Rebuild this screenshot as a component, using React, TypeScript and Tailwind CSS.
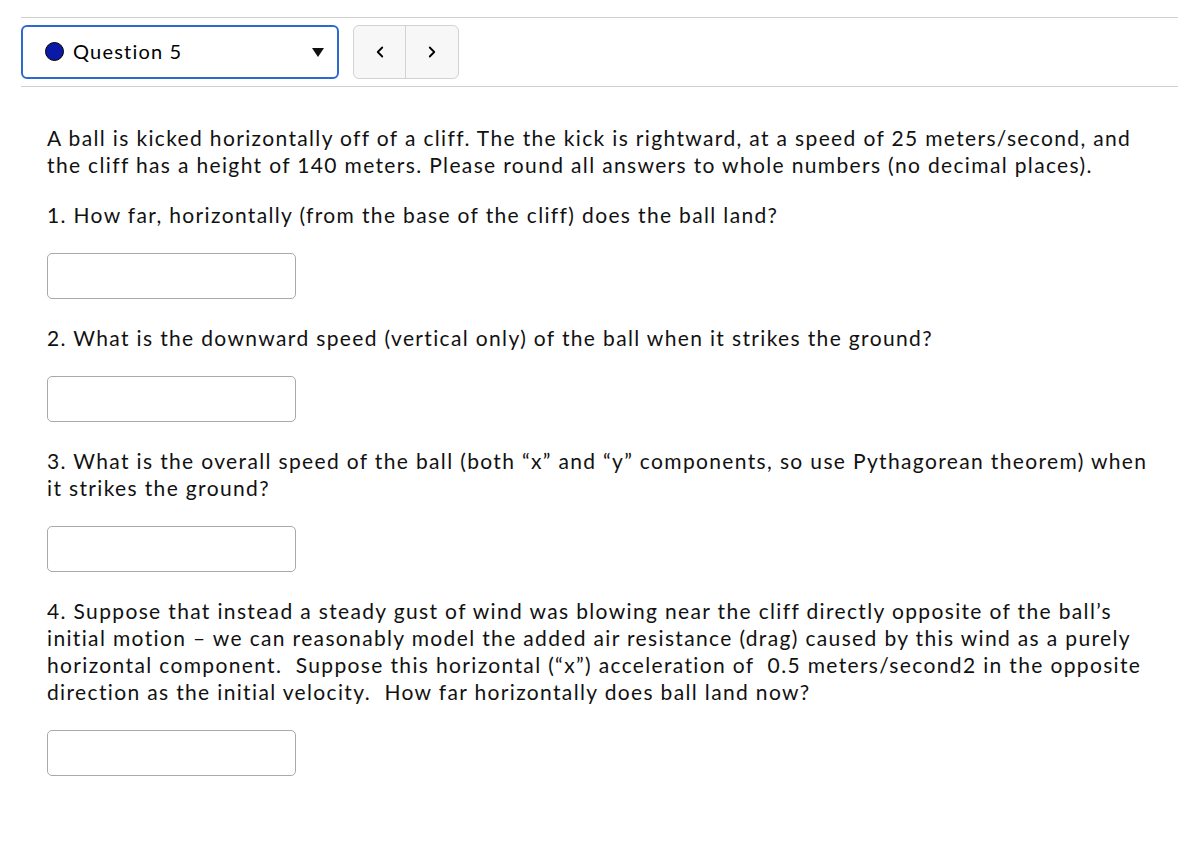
import { ChevronLeft, ChevronRight } from 'lucide-react';

const questions = [
  '1. How far, horizontally (from the base of the cliff) does the ball land?',
  '2. What is the downward speed (vertical only) of the ball when it strikes the ground?',
  '3. What is the overall speed of the ball (both \u201cx\u201d and \u201cy\u201d components, so use Pythagorean theorem) when it strikes the ground?',
  '4. Suppose that instead a steady gust of wind was blowing near the cliff directly opposite of the ball\u2019s initial motion \u2013 we can reasonably model the added air resistance (drag) caused by this wind as a purely horizontal component.\u00a0 Suppose this horizontal (\u201cx\u201d) acceleration of \u00a00.5 meters/second2 in the opposite direction as the initial velocity.\u00a0 How far horizontally does ball land now?',
];

function AnswerBox() {
  return (
    <input
      type="text"
      className="block w-[249px] h-[46px] mt-[25px] rounded-[5px] border border-[#a9a9a9] bg-white outline-none"
    />
  );
}

export default function App() {
  return (
    <div className="min-h-screen bg-white pt-[17px] pl-[21px] text-black" style={{ fontFamily: 'Lato, "Noto Sans", sans-serif' }}>
      {/* Question picker */}
      <div className="border-t border-b border-[#d0d0d0] py-[7px]">
        <div className="flex items-center gap-[14px]">
          <div className="flex items-center w-[318px] h-[54px] border-2 border-[#2c6ad2] rounded-[6px] pl-[22px] pr-[13px] pb-[3px]">
            <span className="w-[19px] h-[19px] mt-[2px] rounded-full bg-[#0a1aa6] border-[1.5px] border-black" />
            <span className="ml-[9px] text-[20px] tracking-[1.2px] leading-none">Question 5</span>
            <svg className="ml-auto mt-[3px]" width="12" height="9" viewBox="0 0 12 9">
              <path d="M0 0 H12 L6 9 Z" fill="#111" />
            </svg>
          </div>
          <div className="flex h-[54px] rounded-[6px] border border-[#d2d2d2] bg-[#f7f7f7] overflow-hidden">
            <button className="w-[52px] flex items-center justify-center border-r border-[#d2d2d2]">
              <ChevronLeft size={18} strokeWidth={2.4} />
            </button>
            <button className="w-[52px] flex items-center justify-center">
              <ChevronRight size={18} strokeWidth={2.4} />
            </button>
          </div>
        </div>
      </div>

      {/* Question body */}
      <div className="pl-[26px] pr-[16px] text-[21px] tracking-[1.35px] leading-[27px] text-[#111]">
        <p className="mt-[37px]">
          A ball is kicked horizontally off of a cliff. The the kick is rightward, at a speed of 25 meters/second, and the cliff has a height of 140 meters. Please round all answers to whole numbers (no decimal places).
        </p>
        {questions.map((q, i) => (
          <div key={i} className={i === 0 ? 'mt-[23px]' : 'mt-[25px]'}>
            <p>{q}</p>
            <AnswerBox />
          </div>
        ))}
      </div>
    </div>
  );
}
